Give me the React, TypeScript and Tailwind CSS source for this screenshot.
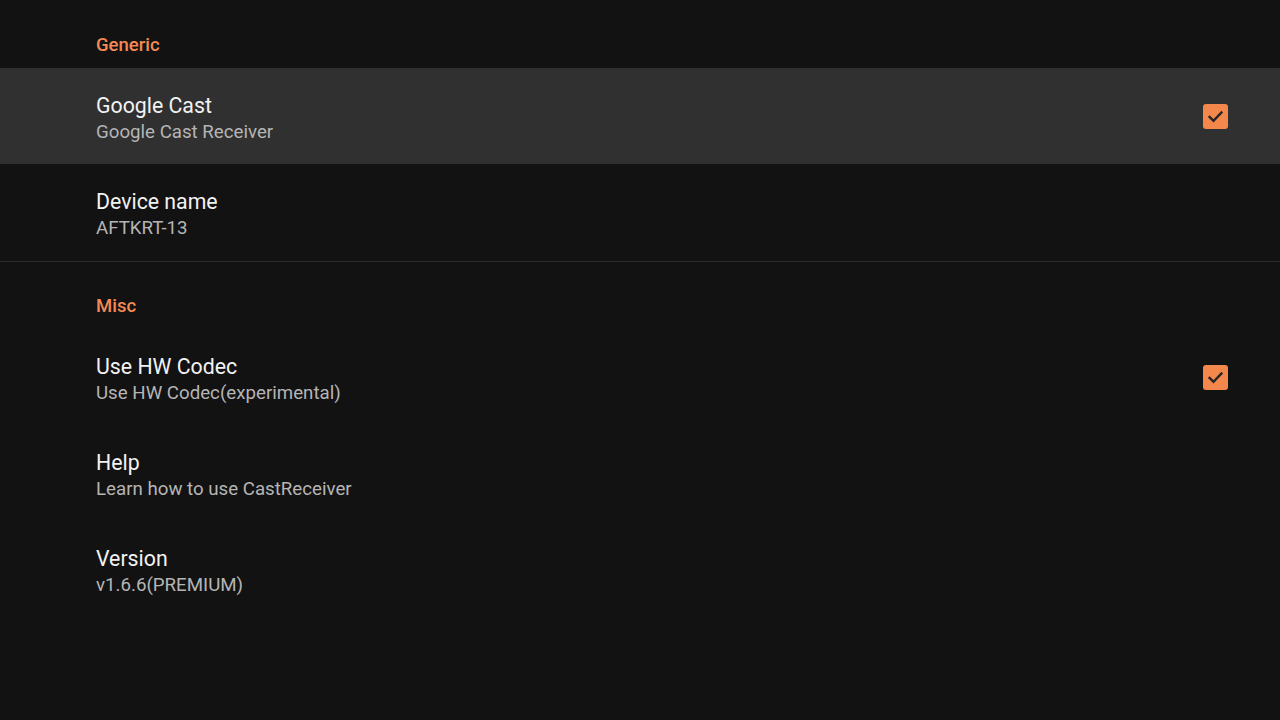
const items = [
  {
    header: "Generic",
    rows: [
      { title: "Google Cast", sub: "Google Cast Receiver", checked: true, focused: true },
      { title: "Device name", sub: "AFTKRT-13" },
    ],
  },
  {
    header: "Misc",
    rows: [
      { title: "Use HW Codec", sub: "Use HW Codec(experimental)", checked: true },
      { title: "Help", sub: "Learn how to use CastReceiver" },
      { title: "Version", sub: "v1.6.6(PREMIUM)" },
    ],
  },
];

function Checkbox() {
  return (
    <div className="w-[25px] h-[25px] rounded-[3px] bg-[#f4874b] flex items-center justify-center">
      <svg width="19" height="19" viewBox="0 0 24 24" fill="none">
        <path d="M4.5 12.5l5 5L19.5 7" stroke="#262626" strokeWidth="3" strokeLinecap="square" />
      </svg>
    </div>
  );
}

export default function App() {
  return (
    <div
      className="w-[1280px] h-[720px] bg-[#121212] overflow-hidden"
      style={{ fontFamily: "Roboto, 'Noto Sans', sans-serif" }}
    >
      {items.map((section, i) => (
        <div key={section.header} className={i > 0 ? "mt-[1px] border-t border-[#2c2c2c]" : ""}>
          <div
            className={
              "pl-[96px] pb-[11px] text-[18.5px] leading-[24px] font-medium text-[#f48a52] " +
              (i > 0 ? "pt-[32px]" : "pt-[33px]")
            }
          >
            {section.header}
          </div>
          {section.rows.map((row) => (
            <div
              key={row.title}
              className={
                "h-[96px] pl-[96px] pr-[52px] flex items-center justify-between " +
                (row.focused ? "bg-[#303030]" : "")
              }
            >
              <div className="pt-[4px]">
                <div className="text-[21.3px] leading-[27px] text-[#f2f2f2]">{row.title}</div>
                <div className="text-[18.7px] leading-[26px] text-[#b5b5b5]">{row.sub}</div>
              </div>
              {row.checked && <Checkbox />}
            </div>
          ))}
        </div>
      ))}
    </div>
  );
}
